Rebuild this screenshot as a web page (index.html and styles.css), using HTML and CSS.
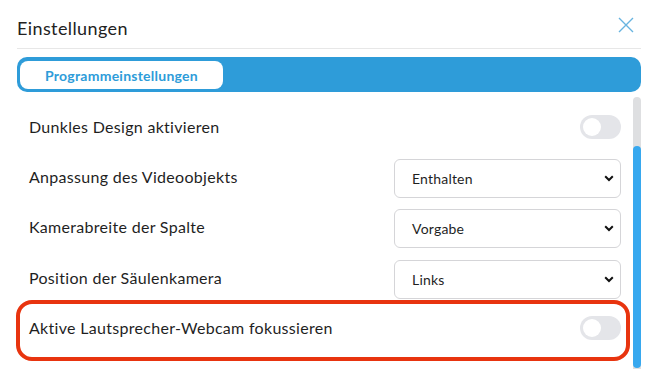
FILE: index.html
```html
<!DOCTYPE html>
<html lang="de">
<head>
    <meta charset="UTF-8">
    <meta name="viewport" content="width=device-width, initial-scale=1.0">
    <title>Einstellungen</title>
    <link rel="stylesheet" href="styles.css">
</head>
<body>
    <div class="modal">
        <div class="modal-header">
            <h2>Einstellungen</h2>
            <button class="close-btn" aria-label="Schließen">
                <svg width="16" height="16" viewBox="0 0 16 16">
                    <path d="M1 1 L15 15 M15 1 L1 15" stroke="#68b4e0" stroke-width="1.4" fill="none"/>
                </svg>
            </button>
        </div>

        <div class="tab-bar">
            <div class="tab active">Programmeinstellungen</div>
        </div>

        <div class="modal-body">
            <div class="settings">
                <div class="row">
                    <span class="label">Dunkles Design aktivieren</span>
                    <div class="toggle"><span class="knob"></span></div>
                </div>
                <div class="row">
                    <span class="label">Anpassung des Videoobjekts</span>
                    <div class="select">
                        <span>Enthalten</span>
                        <svg width="10" height="7" viewBox="0 0 10 7"><path d="M1.2 1.3 L5 5 L8.8 1.3" stroke="#111" stroke-width="2" fill="none"/></svg>
                    </div>
                </div>
                <div class="row">
                    <span class="label">Kamerabreite der Spalte</span>
                    <div class="select">
                        <span>Vorgabe</span>
                        <svg width="10" height="7" viewBox="0 0 10 7"><path d="M1.2 1.3 L5 5 L8.8 1.3" stroke="#111" stroke-width="2" fill="none"/></svg>
                    </div>
                </div>
                <div class="row">
                    <span class="label">Position der Säulenkamera</span>
                    <div class="select">
                        <span>Links</span>
                        <svg width="10" height="7" viewBox="0 0 10 7"><path d="M1.2 1.3 L5 5 L8.8 1.3" stroke="#111" stroke-width="2" fill="none"/></svg>
                    </div>
                </div>
                <div class="row highlighted">
                    <span class="label">Aktive Lautsprecher-Webcam fokussieren</span>
                    <div class="toggle"><span class="knob"></span></div>
                </div>
            </div>
            <div class="scrollbar">
                <div class="thumb"></div>
            </div>
        </div>
    </div>
</body>
</html>
```

FILE: styles.css
```css
* {
    margin: 0;
    padding: 0;
    box-sizing: border-box;
}

body {
    font-family: Lato, "Noto Sans", sans-serif;
    background: #fff;
    color: #1f1f1f;
    width: 657px;
    height: 381px;
    overflow: hidden;
}

.modal {
    padding: 0 16px 0 17px;
}

.modal-header {
    height: 49px;
    display: flex;
    justify-content: space-between;
    align-items: center;
    padding-top: 8px;
    border-bottom: 1px solid #e7e7e7;
}

.modal-header h2 {
    font-size: 18px;
    font-weight: 400;
    color: #222;
    letter-spacing: 0.4px;
}

.close-btn {
    background: none;
    border: none;
    width: 16px;
    height: 16px;
    margin-right: 7px;
    margin-top: -6px;
    cursor: pointer;
}

.close-btn svg {
    display: block;
}

.tab-bar {
    margin-top: 8px;
    height: 35px;
    background: #2e9cd9;
    border-radius: 10px;
    padding: 4px 3px;
}

.tab {
    width: 203px;
    height: 28px;
    background: #fff;
    border-radius: 8px;
    color: #2e9cd9;
    font-size: 14px;
    font-weight: 700;
    display: flex;
    align-items: center;
    padding-left: 25px;
    letter-spacing: 0.25px;
}

.modal-body {
    display: flex;
    margin-top: 5px;
    height: 272px;
}

.settings {
    flex: 1;
    padding-top: 4px;
}

.row {
    position: relative;
    height: 50.3px;
    display: flex;
    justify-content: space-between;
    align-items: center;
    padding: 0 9px 0 12px;
}

.label {
    font-size: 16px;
    letter-spacing: 0.3px;
    color: #1f1f1f;
}

.toggle {
    width: 41px;
    height: 24px;
    border-radius: 12px;
    background: #e4e5e9;
    padding: 3px;
    margin-top: 2px;
}

.knob {
    display: block;
    width: 18px;
    height: 18px;
    border-radius: 50%;
    background: #fff;
}

.select {
    width: 227px;
    height: 39px;
    border: 1px solid #d5d5d8;
    border-radius: 6px;
    display: flex;
    justify-content: space-between;
    align-items: center;
    padding: 0 6px 0 17px;
    font-size: 14px;
    letter-spacing: 0.2px;
    color: #1f1f1f;
    margin-top: 4px;
}

.select svg {
    display: block;
}

.highlighted::after {
    content: "";
    position: absolute;
    top: -2px;
    bottom: -9px;
    left: -1px;
    right: 0;
    border: 4px solid #e8340f;
    border-radius: 16px;
}

.scrollbar {
    width: 8px;
    margin-left: 3px;
    background: #dedfe1;
    border-radius: 4px 4px 0 0;
    height: 272px;
}

.thumb {
    margin-top: 49px;
    height: 222px;
    background: #37a8ef;
    border-radius: 4px;
}
```
